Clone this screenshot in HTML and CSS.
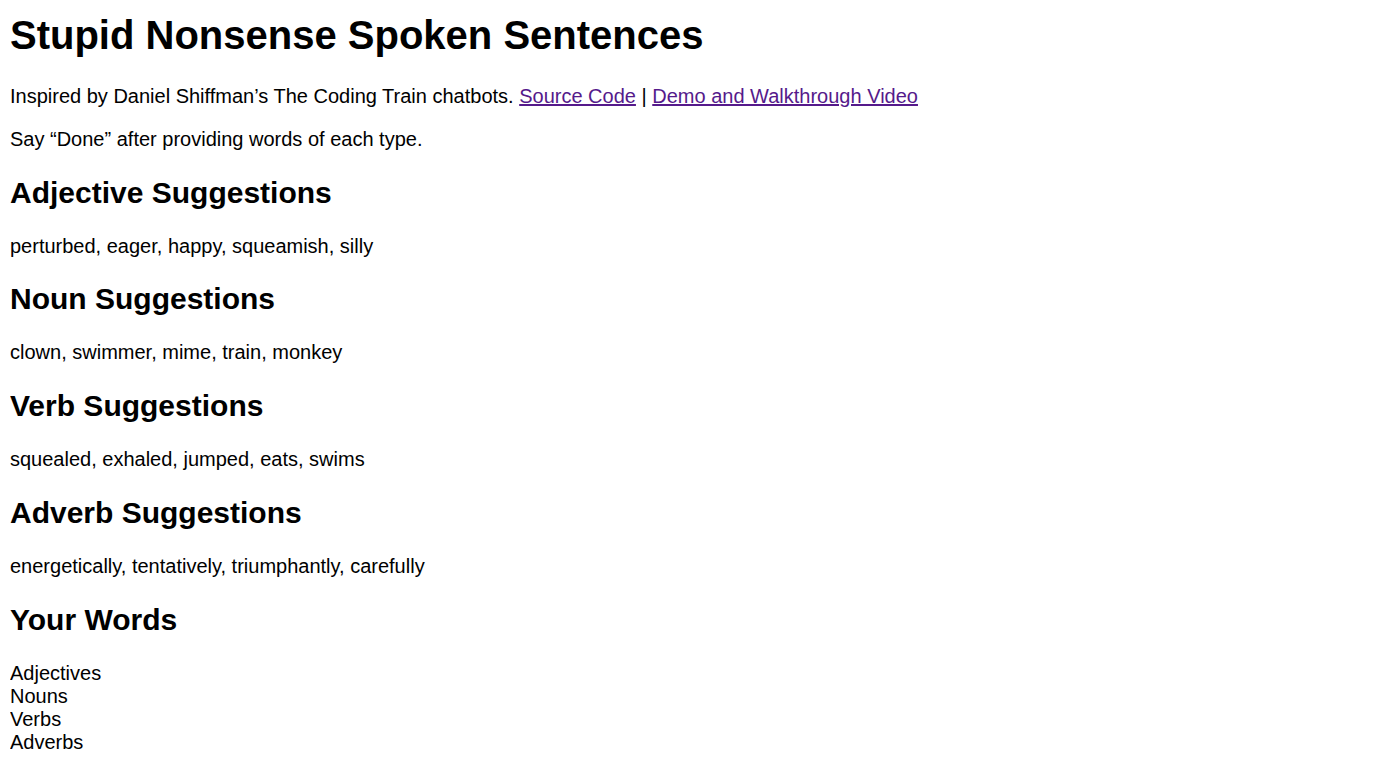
FILE: index.html
```html
<!DOCTYPE html>
<html lang="en">
<head>
<meta charset="utf-8">
<title>Stupid Nonsense Spoken Sentences</title>
<link rel="stylesheet" href="styles.css">
</head>
<body class="page">
<h1 class="title">Stupid Nonsense Spoken Sentences</h1>
<p class="text">Inspired by Daniel Shiffman’s The Coding Train chatbots. <a class="link" href="#source">Source Code</a> | <a class="link" href="#video">Demo and Walkthrough Video</a></p>
<p class="text">Say “Done” after providing words of each type.</p>
<h2 class="heading">Adjective Suggestions</h2>
<p class="text">perturbed, eager, happy, squeamish, silly</p>
<h2 class="heading">Noun Suggestions</h2>
<p class="text">clown, swimmer, mime, train, monkey</p>
<h2 class="heading">Verb Suggestions</h2>
<p class="text">squealed, exhaled, jumped, eats, swims</p>
<h2 class="heading">Adverb Suggestions</h2>
<p class="text">energetically, tentatively, triumphantly, carefully</p>
<h2 class="heading">Your Words</h2>
<div class="words">
<div class="word">Adjectives</div>
<div class="word">Nouns</div>
<div class="word">Verbs</div>
<div class="word">Adverbs</div>
</div>
</body>
</html>
```
FILE: styles.css
```css
html {
  background: #fff;
}
.page {
  margin: 13px 10px 10px;
  font-family: "Liberation Sans", Arial, sans-serif;
  font-size: 20px;
  color: #000;
}
.title {
  font-size: 2em;
  font-weight: bold;
  margin: 0 0 0.67em;
}
.heading {
  font-size: 1.5em;
  font-weight: bold;
  margin: 0.83em 0;
}
.text {
  margin: 1em 0;
}
.link {
  color: #551a8b;
  text-decoration: underline;
}
.words {
  margin: 0;
}
```
